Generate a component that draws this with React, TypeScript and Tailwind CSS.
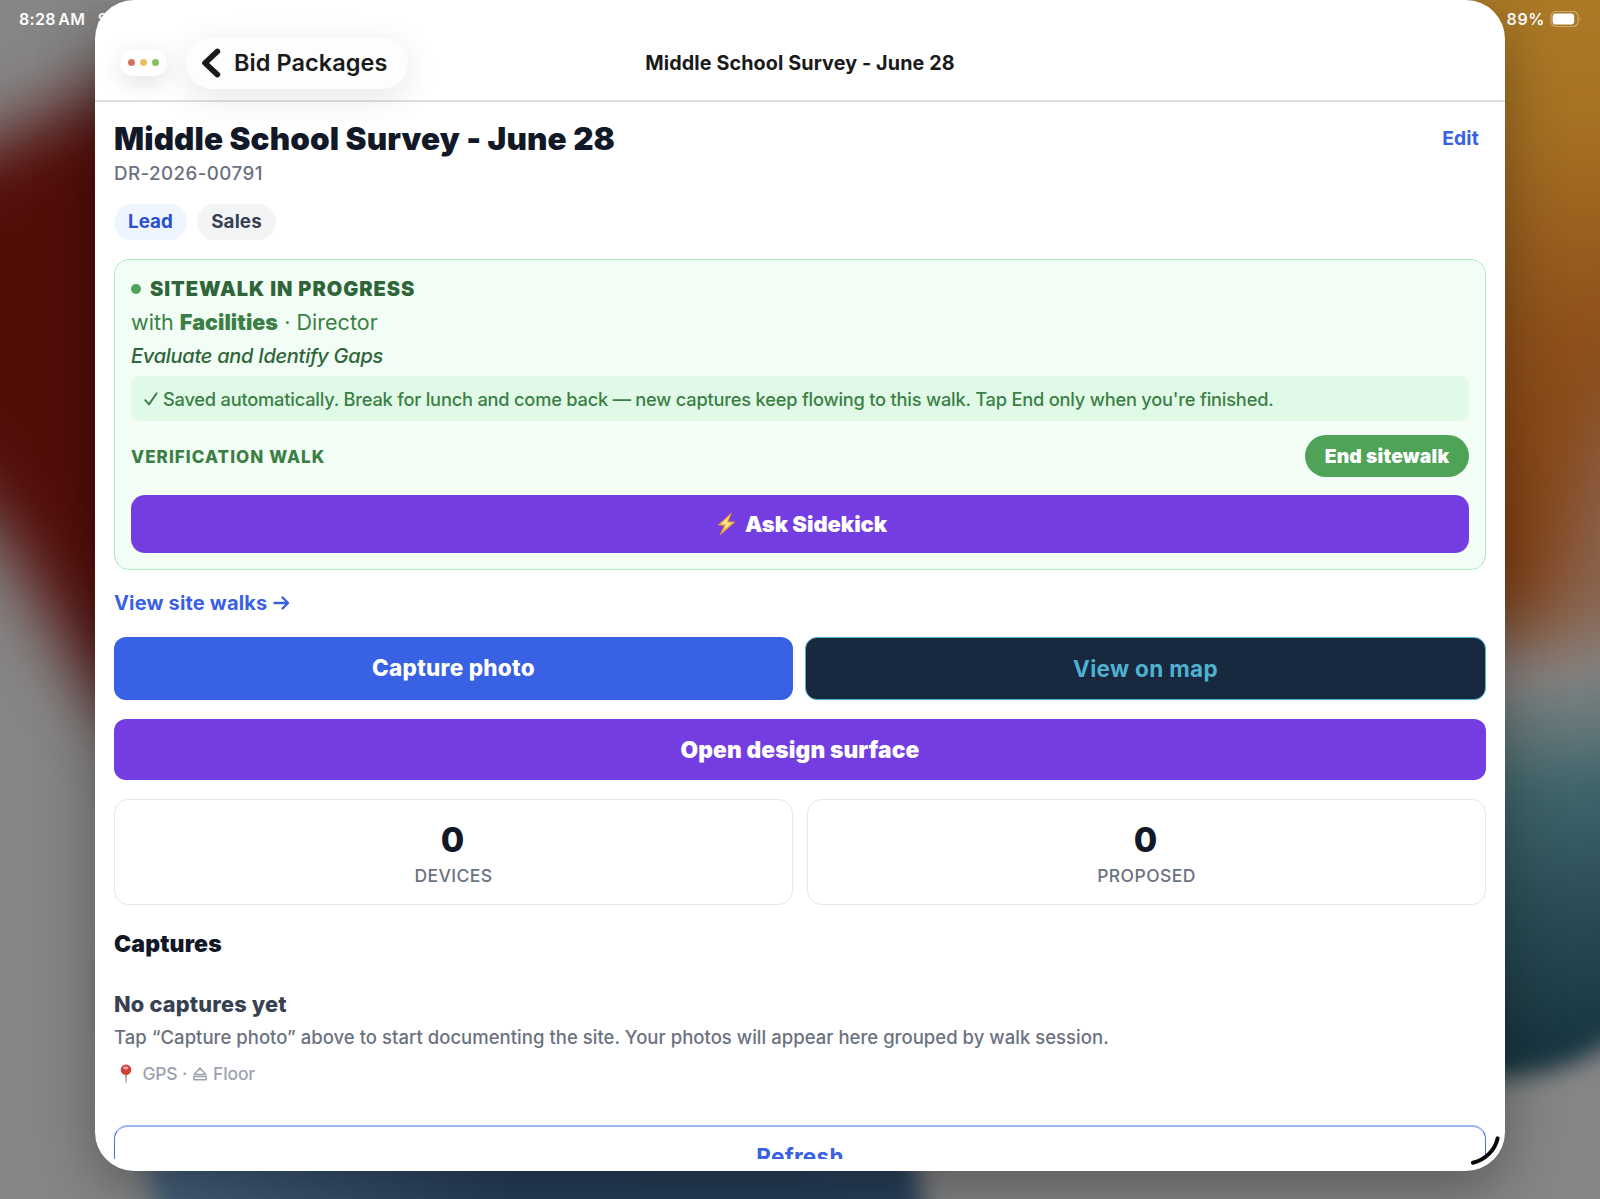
function Wallpaper() {
  return (
    <svg className="absolute inset-0 h-full w-full" viewBox="0 0 1600 1199" preserveAspectRatio="none" aria-hidden="true">
      <defs>
        <filter id="b30" x="-50%" y="-50%" width="200%" height="200%" colorInterpolationFilters="sRGB"><feGaussianBlur stdDeviation="34" /></filter>
        <filter id="b14" x="-50%" y="-50%" width="200%" height="200%" colorInterpolationFilters="sRGB"><feGaussianBlur stdDeviation="12" /></filter>
        <linearGradient id="amber" x1="0" y1="0" x2="0" y2="1">
          <stop offset="0" stopColor="#ad7f28" />
          <stop offset="0.3" stopColor="#a87424" />
          <stop offset="0.6" stopColor="#8e501a" />
          <stop offset="1" stopColor="#7e3b12" />
        </linearGradient>
        <linearGradient id="teal" x1="0" y1="0" x2="0.08" y2="1">
          <stop offset="0" stopColor="#7c8282" stopOpacity="0" />
          <stop offset="0.14" stopColor="#6f7c7d" stopOpacity="0.7" />
          <stop offset="0.35" stopColor="#41666c" />
          <stop offset="0.65" stopColor="#2a4c55" />
          <stop offset="1" stopColor="#16333e" />
        </linearGradient>
        <linearGradient id="navy" x1="0" y1="0" x2="1" y2="0">
          <stop offset="0" stopColor="#4a6680" />
          <stop offset="0.5" stopColor="#263e59" />
          <stop offset="1" stopColor="#28405a" />
        </linearGradient>
      </defs>
      <rect width="1600" height="1199" fill="#868686" />
      <path d="M-150 200 L0 140 L95 90 L300 40 V900 L95 690 L0 535 L-150 380 Z" fill="#520d09" filter="url(#b30)" />
      <path d="M1560 250 H1760 V600 L1600 640 L1500 650 Z" fill="#8a6652" filter="url(#b30)" />
      <path d="M1440 -120 H1760 V270 L1660 340 L1600 440 L1565 560 L1540 630 H1400 Z" fill="url(#amber)" filter="url(#b30)" />
      <path d="M1400 720 L1500 700 L1700 650 V990 L1600 1050 Q1550 1080 1480 1078 H1400 Z" fill="url(#teal)" filter="url(#b14)" />
      <path d="M130 880 L112 1000 L165 1250 H930 L905 1100 L500 1000 Z" fill="url(#navy)" filter="url(#b14)" />
    </svg>
  );
}

function Bolt() {
  return (
    <svg className="h-6 w-[19px]" viewBox="0 0 20 24" aria-hidden="true">
      <path d="M15.2 0.5 L1.2 13 L7.8 13.6 L3.2 23.6 L18.8 10 L11.6 9.4 Z" fill="#f6c445" stroke="#d78a35" strokeWidth="0.9" strokeLinejoin="round" />
      <path d="M12.5 5 L5 11.6 L10.2 12 L8 17 L14.6 11.2 L9.4 10.8 Z" fill="#fdf0b0" />
    </svg>
  );
}

function Pin() {
  return (
    <svg className="h-5 w-3" viewBox="0 0 12 20" aria-hidden="true">
      <path d="M5.2 9 H6.8 L6.5 18 L6 20 L5.5 18 Z" fill="#8f8580" />
      <circle cx="6" cy="5.7" r="5.3" fill="#cf4138" />
      <ellipse cx="5.8" cy="3.9" rx="2.6" ry="1.7" fill="#f0a29c" />
    </svg>
  );
}

function FloorGlyph() {
  return (
    <svg className="h-[14px] w-[14px]" viewBox="0 0 14 14" fill="none" stroke="#9ca3af" strokeWidth="1.5" strokeLinejoin="round" aria-hidden="true">
      <path d="M7 1 L12.8 7.4 H1.2 Z" />
      <rect x="0.9" y="9.6" width="12.2" height="3.2" />
    </svg>
  );
}

function Stat({ value, label }: { value: string; label: string }) {
  return (
    <div className="flex h-[106px] flex-1 flex-col items-center rounded-[14px] border border-[#e8e9eb] pt-[22px]">
      <span className="mr-[2px] text-[34px] leading-[36px] font-extrabold text-[#111827]">{value}</span>
      <span className="mt-[6px] text-[17.5px] leading-6 font-medium tracking-[0.45px] text-[#6b7280]">{label}</span>
    </div>
  );
}

export default function App() {
  return (
    <div className="relative h-[1199px] w-[1600px] overflow-hidden bg-[#828282] font-['Inter',sans-serif] antialiased [font-feature-settings:'calt'_0]">
      <Wallpaper />
      <div className="absolute inset-x-0 top-0 flex h-[37px] items-center pr-[18px] pl-[19px] text-white">
        <span className="text-[16px] leading-5 font-semibold tracking-[0.35px] [word-spacing:-2px] whitespace-nowrap">8:28 AM</span>
        <span className="ml-[12px] text-[16px] leading-5 font-semibold whitespace-nowrap">Sun Jun 28</span>
        <span className="ml-auto text-[16px] leading-5 font-semibold tracking-[0.65px]">89%</span>
        <svg className="ml-[5px] h-4 w-8" viewBox="0 0 32 16" aria-hidden="true">
          <rect x="1" y="0.5" width="27" height="15" rx="5" fill="none" stroke="#c9aa6c" strokeWidth="1.2" />
          <path d="M29.6 5.5 Q31.6 8 29.6 10.5 Z" fill="#c9aa6c" />
          <rect x="2.6" y="2.4" width="21.6" height="11.2" rx="3.4" fill="#fff" />
        </svg>
      </div>

      <main className="relative mx-auto flex h-[1171px] w-[1410px] flex-col overflow-hidden rounded-[39px] bg-white shadow-[0_20px_60px_rgba(0,0,0,0.32)]">
        <header className="relative grid h-[102px] shrink-0 grid-cols-[1fr_auto_1fr] items-center border-b-2 border-[#dedede] pt-[25px]">
          <div className="flex items-center pl-[25px]">
            <div className="flex h-[26px] w-[47px] items-center justify-center gap-[5px] rounded-full bg-white shadow-[0_6px_24px_rgba(0,0,0,0.13)]">
              <i className="size-[7px] rounded-full bg-[#d5705f]" />
              <i className="size-[7px] rounded-full bg-[#e6bf62]" />
              <i className="size-[7px] rounded-full bg-[#84c15f]" />
            </div>
            <button className="ml-[19px] flex h-[52px] w-[222px] items-center rounded-full bg-[#fdfdfd] pl-[15px] text-[#1a1a1a] shadow-[0_8px_34px_rgba(0,0,0,0.10)]">
              <svg className="h-[30px] w-5" viewBox="0 0 20 30" fill="none" stroke="currentColor" strokeWidth="5.6" strokeLinecap="round" strokeLinejoin="round" aria-hidden="true">
                <path d="M16.4 3.4 L4 15 L16.4 26.6" />
              </svg>
              <span className="ml-[13px] text-[23.5px] leading-8 font-semibold tracking-[0.06px] whitespace-nowrap">Bid Packages</span>
            </button>
          </div>
          <span className="text-[19.75px] leading-6 font-bold tracking-[0.1px] whitespace-nowrap text-[#1a1a1a]">Middle School Survey - June 28</span>
          <span />
        </header>

        <div className="mx-[19px] flex h-[1057px] shrink-0 flex-col overflow-hidden">
          <div className="mt-4 flex shrink-0 items-start justify-between">
            <div>
              <h1 className="text-[31.5px] leading-[41px] font-black tracking-[0.1px] text-[#111827]">Middle School Survey - June 28</h1>
              <p className="mt-[3px] text-[18.75px] leading-6 font-medium tracking-[0.42px] text-[#6b7280]">DR-2026-00791</p>
            </div>
            <a className="mt-2 mr-[7px] text-[19.25px] leading-6 font-bold tracking-[0.18px] text-[#3861e3]">Edit</a>
          </div>
          <div className="mt-[18px] flex shrink-0 gap-[10px]">
            <span className="flex h-9 w-[73px] items-center justify-center rounded-full bg-[#eef5ff] pt-px text-[18.75px] font-bold tracking-[0.1px] text-[#2b4fd2]">Lead</span>
            <span className="flex h-9 w-[79px] items-center justify-center rounded-full bg-[#f3f4f6] pt-px text-[18.75px] font-bold tracking-[0.13px] text-[#374151]">Sales</span>
          </div>

          <section className="mt-[19px] flex h-[311px] shrink-0 flex-col rounded-[15px] border border-[#a9edbb] bg-[#f2fdf5] px-4">
            <div className="mt-[17px] flex h-6 items-center">
              <i className="size-[10px] rounded-full bg-[#4fa357]" />
              <span className="ml-[9px] text-[20px] leading-6 font-black tracking-[0.97px] text-[#2f6539]">SITEWALK IN PROGRESS</span>
            </div>
            <p className="mt-[7px] text-[21.5px] leading-7 tracking-[0.04px] text-[#3c7f46]">with <b className="font-black">Facilities</b> · Director</p>
            <p className="mt-2 text-[20px] leading-6 font-medium tracking-[-0.275px] text-[#2f6539] italic">Evaluate and Identify Gaps</p>
            <div className="mt-2 flex h-[45px] items-center rounded-lg bg-[#e0fae7] pl-[13px] text-[#3c7f46]">
              <svg className="h-[14px] w-[14px]" viewBox="0 0 14 14" fill="none" stroke="currentColor" strokeWidth="1.9" strokeLinecap="round" strokeLinejoin="round" aria-hidden="true">
                <path d="M1.2 8.2 L5 12.4 L12.6 1.4" />
              </svg>
              <span className="ml-[5px] text-[18.25px] leading-6 font-medium tracking-[-0.215px] whitespace-nowrap">Saved automatically. Break for lunch and come back — new captures keep flowing to this walk. Tap End only when you're finished.</span>
            </div>
            <div className="mt-[14px] flex h-[42px] items-center justify-between">
              <span className="pt-px text-[17px] leading-6 font-extrabold tracking-[1.07px] text-[#3c7f46]">VERIFICATION WALK</span>
              <button className="h-[42px] w-[164px] rounded-full bg-[#4fa357] pt-px text-[19.25px] font-black tracking-[0.21px] text-white">End sitewalk</button>
            </div>
            <button className="mt-[18px] flex h-[58px] items-center justify-center rounded-[14px] bg-[#743de2] pl-1 text-white">
              <Bolt />
              <span className="ml-[9px] text-[22px] font-black tracking-[-0.05px]">Ask Sidekick</span>
            </button>
          </section>

          <a className="mt-[21px] flex shrink-0 items-center text-[20px] leading-6 font-bold text-[#3861e3]">
            <span className="tracking-[0.165px]">View site walks</span>
            <svg className="ml-[6px] h-4 w-[17px]" viewBox="0 0 17 16" fill="none" stroke="currentColor" strokeWidth="2.4" strokeLinecap="round" strokeLinejoin="round" aria-hidden="true">
              <path d="M1.5 8 H15 M9.5 2.5 L15 8 L9.5 13.5" />
            </svg>
          </a>

          <div className="mt-[22px] flex shrink-0 gap-3">
            <button className="h-[63px] w-[679px] rounded-[12px] bg-[#3861e3] pb-[2px] text-[22.5px] font-extrabold tracking-[0.27px] text-white">Capture photo</button>
            <button className="h-[63px] flex-1 rounded-[12px] border border-[#4fb3cf] bg-[#17283f] text-[22.5px] font-bold tracking-[0.31px] text-[#4fb0cf]">View on map</button>
          </div>
          <button className="mt-[19px] h-[61px] shrink-0 rounded-[12px] bg-[#743de2] pt-px text-[22.75px] font-black tracking-[0.11px] text-white">Open design surface</button>

          <div className="mt-[19px] flex shrink-0 gap-[14px]">
            <Stat value="0" label="DEVICES" />
            <Stat value="0" label="PROPOSED" />
          </div>

          <h2 className="mt-[25px] text-[23px] leading-7 font-black tracking-[0.16px] text-[#111827]">Captures</h2>
          <p className="mt-[32px] text-[21.75px] leading-7 font-extrabold tracking-[0.18px] text-[#374151]">No captures yet</p>
          <p className="mt-[7px] text-[18.5px] leading-6 font-medium tracking-[0.028px] text-[#6b7280]">Tap “Capture photo” above to start documenting the site. Your photos will appear here grouped by walk session.</p>
          <div className="mt-[13px] flex h-6 shrink-0 items-center pl-[6px] text-[17.5px] leading-6 font-medium text-[#9ca3af]">
            <Pin />
            <span className="ml-[10.5px] tracking-[-0.22px]">GPS ·</span>
            <span className="ml-[6px]"><FloorGlyph /></span>
            <span className="ml-[6px] tracking-[-0.13px]">Floor</span>
          </div>
          <button className="mt-[39px] h-[62px] shrink-0 rounded-[14px] border border-t-2 border-[#4a72ea] border-t-[#9db2f5] text-[22.5px] font-bold tracking-[0.29px] text-[#3861e3]">Refresh</button>
        </div>
        <svg className="absolute right-[5px] bottom-[6px] h-8 w-8" viewBox="0 0 32 32" fill="none" stroke="#080808" strokeWidth="4" strokeLinecap="round" aria-hidden="true">
          <path d="M29.6 5.4 C27 17 18 26.5 5 29.8" />
        </svg>
      </main>
    </div>
  );
}
